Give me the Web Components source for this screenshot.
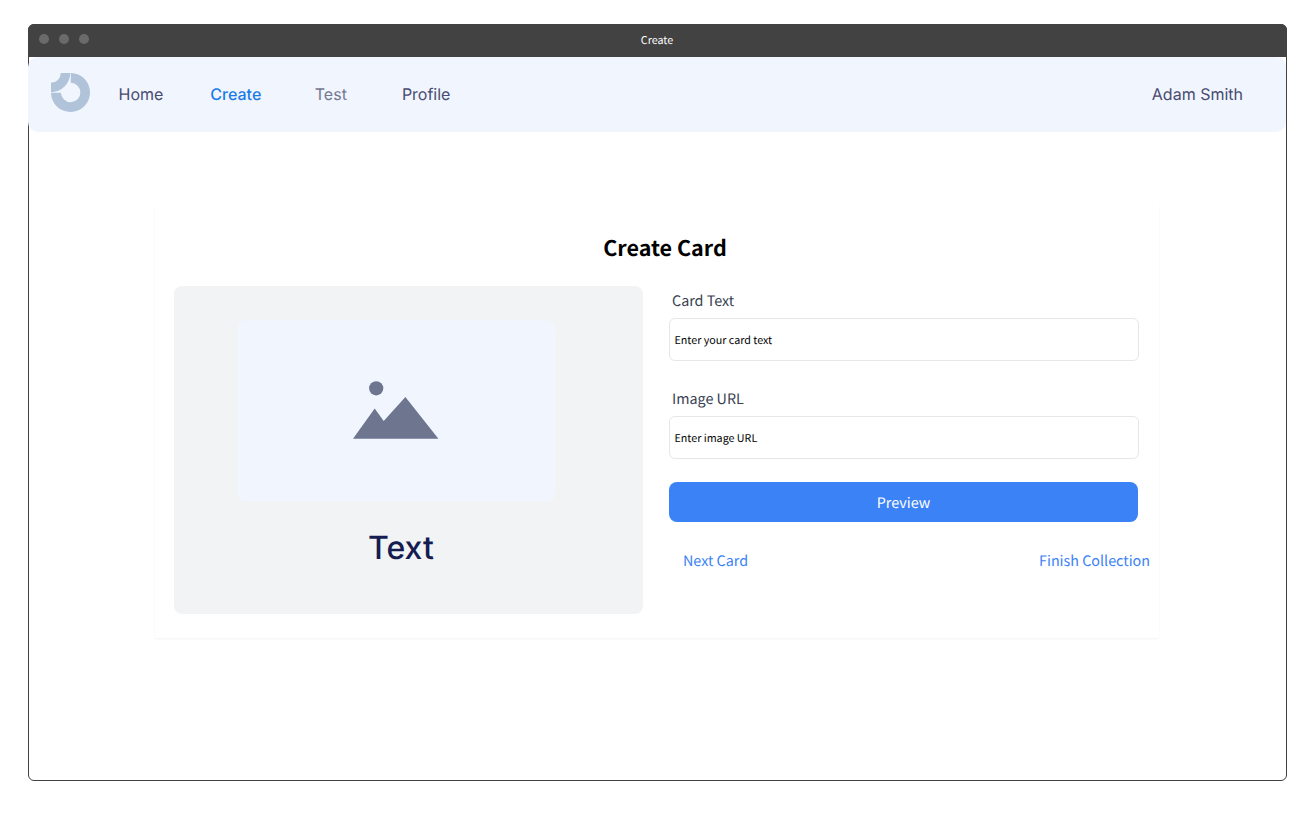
<!DOCTYPE html>
<html lang="en">
<head>
<meta charset="utf-8">
<title>Create</title>
<style>
html, body { margin: 0; height: 100%; background: #fff; }
body { box-sizing: border-box; padding: 24px 21px 40px 28px; font-family: "Noto Sans CJK SC", "Noto Sans", sans-serif; overflow: hidden; text-rendering: geometricPrecision; }
</style>
</head>
<body>
<app-window label="Create">
  <nav-bar>
    <nav-link>Home</nav-link>
    <nav-link state="active" style="margin-left:47px">Create</nav-link>
    <nav-link state="muted" style="margin-left:53.5px">Test</nav-link>
    <nav-link style="margin-left:55px">Profile</nav-link>
    <nav-link slot="user">Adam Smith</nav-link>
  </nav-bar>
  <create-card heading="Create Card">
    <card-preview slot="preview">Text</card-preview>
    <form-field label="Card Text">Enter your card text</form-field>
    <form-field label="Image URL">Enter image URL</form-field>
    <primary-button>Preview</primary-button>
    <link-row><span>Next Card</span><span slot="end">Finish Collection</span></link-row>
  </create-card>
</app-window>
<script>
function define(name, markup) {
  customElements.define(name, class extends HTMLElement {
    constructor() {
      super();
      this.attachShadow({ mode: 'open' }).innerHTML = markup;
    }
    connectedCallback() {
      this.shadowRoot.querySelectorAll('[data-attr]').forEach(n => {
        n.textContent = this.getAttribute(n.dataset.attr) || '';
      });
    }
  });
}

define('app-window', `
<style>
:host { display: flex; flex-direction: column; box-sizing: border-box; height: 757px; width: 1259px; border: 1px solid #424242; border-radius: 6px; }
header { display: grid; grid-template-columns: 1fr auto 1fr; height: 33px; margin: -1px -1px 0; background: #424242; border-radius: 6px 6px 0 0; box-sizing: border-box; padding: 0 12px 0 11px; color: #fff; font-size: 10.72px; line-height: 34px; }
.dots { display: flex; gap: 10px; padding: 10px 0 0 .4px; }
i { width: 10px; height: 10px; border-radius: 50%; background: #6a6a6a; }
</style>
<header><div class="dots"><i></i><i></i><i></i></div><span data-attr="label"></span></header>
<slot></slot>`);

define('nav-bar', `
<style>
:host { display: flex; align-items: center; height: 75px; box-sizing: border-box; margin: 0 0 0 -1px; padding: 0 43px 0 23px; background: #f0f5fe; border-radius: 10px; font-family: Inter, sans-serif; }
svg { display: block; flex: none; margin: -4px 28.5px 0 0; }
.user { margin-left: auto; }
</style>
<svg width="39" height="39" viewBox="0 0 39 39" fill="#b0c3d8">
<path d="M19.8 0A19.5 19.5 0 1 1 0 19.8L9.9 19.8A9.75 9.75 0 1 0 19.8 9.75Z"/>
<path d="M9.75 0H19.2A19.2 19.2 0 0 1 0 19.2V9.75A9.75 9.75 0 0 0 9.75 0Z"/>
</svg>
<slot></slot><div class="user"><slot name="user"></slot></div>`);

define('nav-link', `
<style>
:host { display: block; margin-top: -2px; color: #484c70; font-size: 16px; line-height: 24px; white-space: nowrap; }
:host([state=active]) { color: #1a7ae6; font-weight: 500; }
:host([state=muted]) { color: #737792; }
</style><slot></slot>`);

define('create-card', `
<style>
:host { display: block; box-sizing: border-box; width: 1004px; height: 434px; margin: 72px 0 0 126px; padding: 26px 20px 0 19px; background: #fff; box-shadow: 0 1px 2px rgba(0,0,0,.05); }
h1 { margin: 0 0 20px; padding-left: 17px; text-align: center; font-size: 21.5px; line-height: 36px; font-weight: 700; color: #000; }
.cols { display: grid; grid-template-columns: 469px 470px; gap: 26px; }
.form { display: flex; flex-direction: column; }
</style>
<h1 data-attr="heading"></h1>
<div class="cols"><slot name="preview"></slot><div class="form"><slot></slot></div></div>`);

define('card-preview', `
<style>
:host { display: flex; flex-direction: column; align-items: center; box-sizing: border-box; height: 328px; padding: 34px 25px 0 0; background: #f2f3f5; border-radius: 8px; }
.pic { display: flex; align-items: flex-start; justify-content: center; width: 319px; height: 182px; background: #f0f5fe; border-radius: 10px; }
svg { margin-top: 60px; }
.label { margin: 22px 0 0 10px; color: #141c52; font: 500 32px/48px Inter, sans-serif; }
</style>
<div class="pic"><svg width="86" height="60" viewBox="0 0 86 60" fill="#6e758f"><circle cx="23.2" cy="8.3" r="7.1"/><path d="M0 58.8L21.7 28.5L30.7 41L52.4 17L85.4 58.8Z"/></svg></div>
<div class="label"><slot></slot></div>`);

define('form-field', `
<style>
:host { display: block; margin-bottom: 23px; }
label { display: block; margin: 3px 0 5px 3px; color: #374151; font-size: 14.33px; line-height: 24px; }
.box { box-sizing: border-box; height: 43px; padding-left: 4.5px; border: 1px solid #e5e7eb; border-radius: 6px; color: #000; font-size: 10.72px; line-height: 44px; }
</style>
<label data-attr="label"></label><div class="box"><slot></slot></div>`);

define('primary-button', `
<style>
:host { display: block; width: 469px; height: 40px; border-radius: 8px; background: #3b82f6; color: #fff; font-size: 14.33px; line-height: 41px; text-align: center; }
</style><slot></slot>`);

define('link-row', `
<style>
:host { display: flex; justify-content: space-between; margin: 27px -11px 0 14px; color: #3b82f6; font-size: 14.33px; line-height: 24px; white-space: nowrap; }
</style><slot></slot><slot name="end"></slot>`);
</script>
</body>
</html>
